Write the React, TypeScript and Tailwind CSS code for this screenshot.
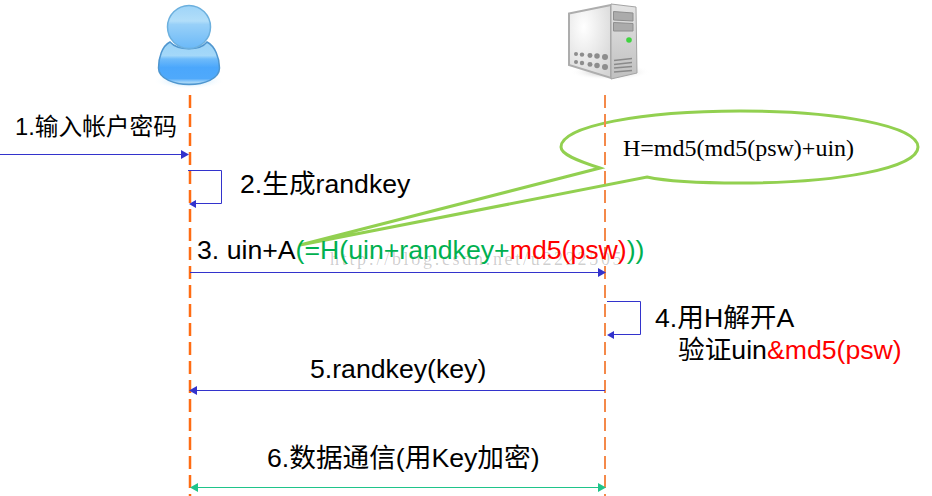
const blue = '#3333cc';
const sans = 'font-["Liberation_Sans","Noto_Sans_CJK_SC",sans-serif]';

function Label({ className, children }: { className: string; children: React.ReactNode }) {
  return <div className={`absolute whitespace-nowrap leading-none text-black ${sans} ${className}`}>{children}</div>;
}

function UserIcon() {
  return (
    <svg className="absolute left-[150px] top-0" width="80" height="92" viewBox="0 0 80 92">
      <defs>
        <linearGradient id="head" x1="0" y1="0" x2="0" y2="1">
          <stop offset="0" stopColor="#9ed4f8" />
          <stop offset="0.36" stopColor="#b2def9" />
          <stop offset="0.44" stopColor="#98d0f8" />
          <stop offset="1" stopColor="#6bb9f8" />
        </linearGradient>
        <linearGradient id="body" x1="0" y1="0" x2="0" y2="1">
          <stop offset="0" stopColor="#9bd3f7" />
          <stop offset="0.32" stopColor="#a4d8f9" />
          <stop offset="0.4" stopColor="#6fbbfa" />
          <stop offset="0.6" stopColor="#4ba7fc" />
          <stop offset="0.86" stopColor="#4fa9fb" />
          <stop offset="0.95" stopColor="#a6d6f8" />
          <stop offset="1" stopColor="#7fbde8" />
        </linearGradient>
        <radialGradient id="glow" cx="0.5" cy="0.5" r="0.5">
          <stop offset="0" stopColor="#8fd0fa" />
          <stop offset="1" stopColor="#ffffff" stopOpacity="0" />
        </radialGradient>
      </defs>
      <ellipse cx="39" cy="81" rx="36" ry="8" fill="url(#glow)" />
      <path
        d="M20 42 C12 46 8.5 58 8.5 68 C8.5 79 25 84.5 39 84.5 C54 84.5 69.5 79 69.5 68 C69.5 58 65 46 57 42 C50 51 28 51 20 42 Z"
        fill="url(#body)"
        stroke="#4f96cf"
        strokeWidth="1.5"
      />
      <circle cx="39" cy="27" r="21.5" fill="url(#head)" stroke="#6cb0de" strokeWidth="1.5" />
    </svg>
  );
}

function ServerIcon() {
  return (
    <svg className="absolute left-[550px] top-0" width="110" height="90" viewBox="0 0 110 90">
      <defs>
        <radialGradient id="side" cx="0.35" cy="0.3" r="0.85">
          <stop offset="0" stopColor="#ffffff" />
          <stop offset="1" stopColor="#d4d4d4" />
        </radialGradient>
        <linearGradient id="front" x1="0" y1="0" x2="0" y2="1">
          <stop offset="0" stopColor="#e4e4e4" />
          <stop offset="1" stopColor="#c0c0c0" />
        </linearGradient>
        <radialGradient id="shade" cx="0.5" cy="0.5" r="0.5">
          <stop offset="0" stopColor="#9a9a9a" />
          <stop offset="1" stopColor="#ffffff" stopOpacity="0" />
        </radialGradient>
      </defs>
      <ellipse cx="60" cy="72" rx="40" ry="8" fill="url(#shade)" />
      <path d="M19 13.5 L61 5 L61 78 L19 65 Z" fill="url(#side)" stroke="#adadad" strokeWidth="2" />
      <path d="M61 4 L86 7 L87 73 L61 79 Z" fill="url(#front)" stroke="#a4a4a4" strokeWidth="1" />
      <path d="M63.5 11.5 L83 13 L83 21 L63.5 20 Z" fill="#ababab" stroke="#8e8e8e" />
      <path d="M63.5 22.5 L83 23.5 L83 31 L63.5 31 Z" fill="#ababab" stroke="#8e8e8e" />
      <circle cx="79" cy="40" r="2.8" fill="#3fd43f" />
      <path d="M64 60.5 L82 58.5 M64 64.5 L82 62.5 M64 68 L82 66.5 M64 72 L82 70.5" stroke="#8a8a8a" strokeWidth="1.5" />
      {[26, 32, 40, 47, 55].map((x) => (
        <g key={x} fill="#8d8d8d">
          <circle cx={x} cy={54 + (x - 26) * 0.1} r={2 + (x - 26) * 0.035} />
          <circle cx={x} cy={62 + (x - 26) * 0.17} r={2 + (x - 26) * 0.035} />
        </g>
      ))}
    </svg>
  );
}

function Lines() {
  return (
    <svg className="absolute inset-0" width="932" height="496" viewBox="0 0 932 496">
      {/* callout bubble */}
      <path
        d="M600 168 C575 160 561 154 561 147 C561 126 642 111 740 111 C838 111 918 126 918 147 C918 168 838 183 740 183 C710 183 670 182 647 177 L300 245 Z"
        fill="#fff"
        stroke="#92d050"
        strokeWidth="3"
      />
      {/* lifelines */}
      <line x1="190" y1="95" x2="190" y2="496" stroke="#ff6c13" strokeWidth="2.5" strokeDasharray="13 6" />
      <line x1="605" y1="95" x2="605" y2="496" stroke="#f4894a" strokeWidth="2" strokeDasharray="13 6" />

      <g stroke={blue} strokeWidth="1" fill="none">
        <path d="M0 154.5 H182" />
        <path d="M188 170.5 H221.5 V203.5 H195" />
        <path d="M190 272.5 H598" />
        <path d="M607 301.5 H640.5 V334.5 H613" />
        <path d="M605 390.5 H196" />
      </g>
      <g fill={blue}>
        <path d="M181 150 L189 154.5 L181 159 Z" />
        <path d="M189 204 L196 200 V208 Z" />
        <path d="M598 268 L606 272.5 L598 277 Z" />
        <path d="M607 335 L614 331 V339 Z" />
        <path d="M189 390.5 L197 386 V395 Z" />
      </g>
      <path d="M196 487.5 H600" stroke="#1fc48a" strokeWidth="1" />
      <path d="M190 487.5 L198 483 V492 Z M606 487.5 L598 483 V492 Z" fill="#1fc48a" />
    </svg>
  );
}

export default function App() {
  return (
    <div className="relative h-[496px] w-[932px] overflow-hidden bg-white">
      <Lines />
      <UserIcon />
      <ServerIcon />

      <Label className="left-[15px] top-[116px] text-[23.7px]">1.输入帐户密码</Label>
      <Label className="left-[240px] top-[171px] text-[26.67px]">2.生成randkey</Label>
      <div className='absolute left-[330px] top-[250px] whitespace-nowrap font-["Liberation_Serif",serif] text-[18px] leading-none tracking-[2.7px] text-black/20'>
        http://blog.csdn.net/u2222505
      </div>
      <Label className="left-[197px] top-[237px] text-[26.67px]">
        3. uin+A
        <span className="text-[#00b050]">(=H(uin+randkey+</span>
        <span className="text-[#ff0000]">md5(psw)</span>
        <span className="text-[#00b050]">))</span>
      </Label>
      <div className='absolute left-[623px] top-[136px] whitespace-nowrap font-["Liberation_Serif",serif] text-[24px] leading-none text-black'>
        H=md5(md5(psw)+uin)
      </div>
      <Label className="left-[655px] top-[305px] text-[26.67px]">4.用H解开A</Label>
      <Label className="left-[678px] top-[337px] text-[26.67px]">
        验证uin<span className="text-[#ff0000]">&amp;md5(psw)</span>
      </Label>
      <Label className="left-[310px] top-[356px] text-[26.67px]">5.randkey(key)</Label>
      <Label className="left-[267px] top-[445px] text-[26.67px]">6.数据通信(用Key加密)</Label>
    </div>
  );
}
